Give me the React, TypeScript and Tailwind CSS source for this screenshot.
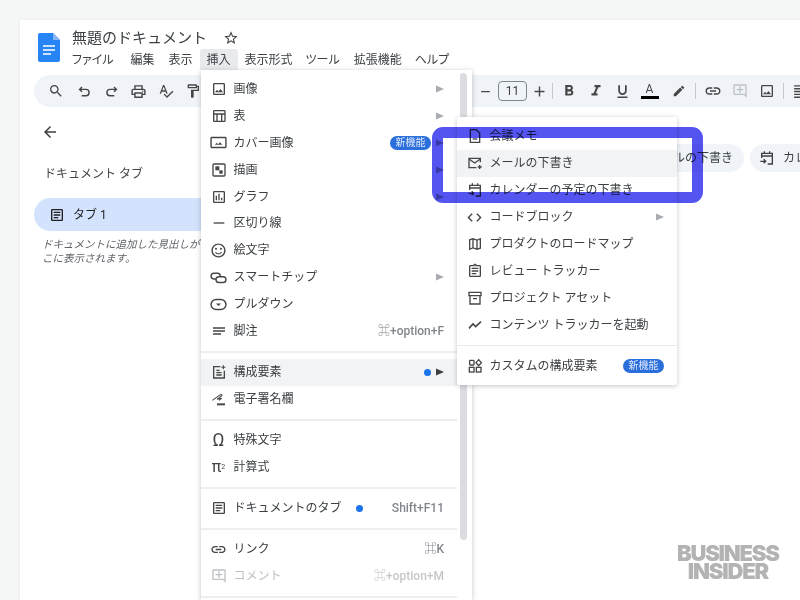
import type { ReactNode } from "react";
import {
  MdSearch,
  MdOutlinePrint,
  MdSpellcheck,
  MdOutlineFormatPaint,
  MdAdd,
  MdRemove,
  MdFormatBold,
  MdFormatItalic,
  MdFormatUnderlined,
  MdEdit,
  MdLink,
  MdOutlineAddComment,
  MdOutlineImage,
  MdFormatAlignLeft,
  MdArrowBack,
  MdStarBorder,
  MdOutlineArticle,
  MdOutlineSentimentSatisfied,
  MdCode,
  MdOutlineMap,
  MdOutlineAssignment,
  MdHorizontalRule,
  MdOutlineInsertChart,
  MdOutlineTableChart,
} from "react-icons/md";

const menus = [
  { label: "ファイル", cls: "pl-[7px] pr-[10px]" },
  { label: "編集", cls: "px-[7px]" },
  { label: "表示", cls: "px-[7px]" },
  { label: "挿入", cls: "px-[7px] bg-[#e8eaed]" },
  { label: "表示形式", cls: "px-[7px]" },
  { label: "ツール", cls: "pl-[6px] pr-[7px]" },
  { label: "拡張機能", cls: "px-[7px]" },
  { label: "ヘルプ", cls: "pl-[6px] pr-[7px]" },
];

// small drawings that the icon set has no match for
function Svg({ children, size = 16 }: { children: ReactNode; size?: number }) {
  return (
    <svg width={size} height={size} viewBox="0 0 24 24" fill="none" stroke="currentColor" strokeWidth="2">
      {children}
    </svg>
  );
}

const UndoIcon = () => (
  <Svg size={17}>
    <path d="M8.500 5.500L5 9l3.500 3.500M5.500 9H14a4.500 4.500 0 0 1 0 9H8" />
  </Svg>
);
const RedoIcon = () => (
  <Svg size={17}>
    <path d="M15.500 5.500L19 9l-3.500 3.500M18.500 9H10a4.500 4.500 0 0 0 0 9h6" />
  </Svg>
);
const CoverIcon = () => (
  <Svg size={17}>
    <rect x="1.500" y="5" width="21" height="14" rx="1" />
    <path d="M7 15l2.500-2.500 2 2 2.500-3 3.500 3.500z" fill="currentColor" stroke="none" />
  </Svg>
);
const DrawingIcon = () => (
  <Svg>
    <rect x="3" y="3" width="18" height="18" rx="1.500" />
    <rect x="6.500" y="6.500" width="6" height="6" fill="currentColor" stroke="none" />
    <rect x="12.500" y="12.500" width="5" height="5" fill="currentColor" stroke="none" />
  </Svg>
);
const ChipIcon = () => (
  <Svg size={17}>
    <rect x="1.500" y="6" width="13" height="8" rx="4" />
    <rect x="8.500" y="11" width="14" height="8" rx="4" fill="white" />
  </Svg>
);
const DropdownIcon = () => (
  <Svg size={17}>
    <rect x="1.500" y="5" width="21" height="14" rx="7" />
    <path d="M8.500 10.500h7L12 14z" fill="currentColor" stroke="none" />
  </Svg>
);
const FootnoteIcon = () => (
  <Svg>
    <path d="M3 7.500h18M3 12h18M3 16.500h12" />
  </Svg>
);
const BlockIcon = () => (
  <Svg>
    <path d="M14 4H4v17h16V10" />
    <path d="M8 9.500h5M8 13h8M8 16.500h8" />
    <path d="M18.500 2v6M15.500 5h6" strokeWidth="1.600" />
  </Svg>
);
const SignIcon = () => (
  <Svg>
    <path d="M2 14L14 5.500c2-1 3.500 1 1.500 2L9 12.500l7-1.500-4 3" strokeWidth="1.600" />
    <path d="M9 20h12" strokeWidth="3" />
  </Svg>
);
const NoteIcon = () => (
  <Svg>
    <path d="M5 2.500h9l5 5v14H5z" />
    <path d="M8.500 16.500h7" />
  </Svg>
);
const MailDraftIcon = () => (
  <Svg>
    <path d="M20 11V5H3v14h11" />
    <path d="M3 6l8.500 6L20 6" />
    <path d="M19 15v6M16 18h6" />
  </Svg>
);
const CalendarDraftIcon = () => (
  <Svg>
    <path d="M4 12V5h16v16h-7" />
    <path d="M4 9h16M8 2v4M16 2v4" />
    <path d="M2 17h8M7 14l3 3-3 3" />
  </Svg>
);
const BoxIcon = () => (
  <Svg>
    <path d="M3 3.500h18v5H3zM4.500 8.500V21h15V8.500M9 13h6" />
  </Svg>
);
const TrackerIcon = () => (
  <Svg>
    <path d="M3 17l6-6.500 4 4L21 7" strokeWidth="2.400" />
  </Svg>
);
const CustomBlocksIcon = () => (
  <Svg>
    <rect x="4" y="3.500" width="6.500" height="7" rx="1" />
    <path d="M17.500 2.500l4 4.500-4 4.500-4-4.500z" />
    <rect x="3.500" y="14" width="7" height="7" />
    <rect x="14" y="14" width="7" height="7" />
  </Svg>
);

function Arrow({ dark }: { dark?: boolean }) {
  return (
    <svg width="8" height="8" viewBox="0 0 8 8" className={dark ? "text-[#3c4043]" : "text-[#a8acb0]"}>
      <path d="M0 0.500L8 4L0 7.500z" fill="currentColor" />
    </svg>
  );
}

function Badge() {
  return (
    <span className="flex h-[14px] w-[41px] items-center justify-center rounded-full bg-[#2a6fdb] text-[10px] text-[#dfe9fb]">
      新機能
    </span>
  );
}

function Row({
  icon,
  label,
  shortcut,
  arrow,
  active,
  disabled,
  children,
}: {
  icon: ReactNode;
  label: string;
  shortcut?: string;
  arrow?: boolean;
  active?: boolean;
  disabled?: boolean;
  children?: ReactNode;
}) {
  return (
    <div
      className={`flex h-[26.9px] items-center pl-[9px] pr-[13px] text-xs ${active ? "bg-[#f1f3f4]" : ""} ${
        disabled ? "text-[#bdc1c6]" : "text-[#3c4043]"
      }`}
    >
      <span
        className={`mr-[6.5px] flex w-[17px] shrink-0 items-center justify-center ${
          disabled ? "text-[#bdc1c6]" : "text-[#444746]"
        }`}
      >
        {icon}
      </span>
      <span className="whitespace-nowrap">{label}</span>
      {children}
      {shortcut && (
        <span className={`ml-auto whitespace-nowrap font-medium ${disabled ? "text-[#c4c7ca]" : "text-[#80868b]"}`}>
          {shortcut}
        </span>
      )}
      {arrow && (
        <span className={children ? "" : "ml-auto"}>
          <Arrow dark={active} />
        </span>
      )}
    </div>
  );
}

const Sep = () => <div className="my-[6.15px] h-[2px] bg-[#eceef0]" />;

function InsertMenu() {
  return (
    <div className="absolute left-[201px] top-[70px] flex h-[530px] w-[271px] bg-white pt-[5.5px] shadow-[0_1px_5px_rgba(60,64,67,0.3)]">
      <div className="w-[256px] shrink-0">
        <Row icon={<MdOutlineImage size={16} />} label="画像" arrow />
        <Row icon={<MdOutlineTableChart size={16} />} label="表" arrow />
        <Row icon={<CoverIcon />} label="カバー画像" arrow>
          <span className="ml-auto mr-[5px]">
            <Badge />
          </span>
        </Row>
        <Row icon={<DrawingIcon />} label="描画" arrow />
        <Row icon={<MdOutlineInsertChart size={16} />} label="グラフ" arrow />
        <Row icon={<MdHorizontalRule size={16} />} label="区切り線" />
        <Row icon={<MdOutlineSentimentSatisfied size={17} />} label="絵文字" />
        <Row icon={<ChipIcon />} label="スマートチップ" arrow />
        <Row icon={<DropdownIcon />} label="プルダウン" />
        <Row icon={<FootnoteIcon />} label="脚注" shortcut="⌘+option+F" />
        <Sep />
        <Row icon={<BlockIcon />} label="構成要素" arrow active>
          <span className="ml-auto mr-[5px] h-[7px] w-[7px] rounded-full bg-[#1a73e8]" />
        </Row>
        <Row icon={<SignIcon />} label="電子署名欄" />
        <Sep />
        <Row icon={<span className="text-[18px] leading-none">Ω</span>} label="特殊文字" />
        <Row
          icon={
            <span className="text-[16px] leading-none">
              π<sup className="text-[7px]">2</sup>
            </span>
          }
          label="計算式"
        />
        <Sep />
        <Row icon={<MdOutlineArticle size={16} />} label="ドキュメントのタブ" shortcut="Shift+F11">
          <span className="ml-[14px] h-[7px] w-[7px] rounded-full bg-[#1a73e8]" />
        </Row>
        <Sep />
        <Row icon={<MdLink size={17} />} label="リンク" shortcut="⌘K" />
        <Row icon={<MdOutlineAddComment size={16} />} label="コメント" shortcut="⌘+option+M" disabled />
        <Sep />
      </div>
      <div className="ml-[3px] mt-[-3px] h-[467px] w-[7px] rounded-full bg-[#dadce0]" />
    </div>
  );
}

function SubMenu() {
  return (
    <div className="absolute left-[457px] top-[117px] h-[268px] w-[220px] rounded-[3px] bg-white pt-[6px] shadow-[0_1px_5px_rgba(60,64,67,0.3)]">
      <Row icon={<NoteIcon />} label="会議メモ" />
      <Row icon={<MailDraftIcon />} label="メールの下書き" active />
      <Row icon={<CalendarDraftIcon />} label="カレンダーの予定の下書き" />
      <Row icon={<MdCode size={17} />} label="コードブロック" arrow />
      <Row icon={<MdOutlineMap size={16} />} label="プロダクトのロードマップ" />
      <Row icon={<MdOutlineAssignment size={16} />} label="レビュー トラッカー" />
      <Row icon={<BoxIcon />} label="プロジェクト アセット" />
      <Row icon={<TrackerIcon />} label="コンテンツ トラッカーを起動" />
      <div className="my-[6.5px] h-px bg-[#e8eaed]" />
      <Row icon={<CustomBlocksIcon />} label="カスタムの構成要素">
        <span className="ml-auto">
          <Badge />
        </span>
      </Row>
    </div>
  );
}

function ToolButton({ children }: { children: ReactNode }) {
  return <span className="flex w-[27px] shrink-0 items-center justify-center text-[#444746]">{children}</span>;
}

const ToolSep = () => <span className="mx-[3px] h-[16px] w-px shrink-0 bg-[#c7c7c7]" />;

function Toolbar() {
  return (
    <div className="mt-[5px] flex h-[32px] items-center overflow-hidden rounded-l-full bg-[#f0f4f9] pl-[8px]">
      <ToolButton><MdSearch size={16} /></ToolButton>
      <span className="w-[2px] shrink-0" />
      <ToolButton><UndoIcon /></ToolButton>
      <ToolButton><RedoIcon /></ToolButton>
      <ToolButton><MdOutlinePrint size={17} /></ToolButton>
      <ToolButton><MdSpellcheck size={16} /></ToolButton>
      <ToolButton><MdOutlineFormatPaint size={16} /></ToolButton>
      <span className="w-[266px] shrink-0" />
      <ToolButton><MdRemove size={15} /></ToolButton>
      <span className="mx-[-1px] flex h-[20px] w-[29px] shrink-0 items-center justify-center rounded-[4px] border border-[#80868b] text-xs text-[#3c4043]">
        11
      </span>
      <ToolButton><MdAdd size={17} /></ToolButton>
      <span className="ml-[-1px] mr-[2px] h-[16px] w-px shrink-0 bg-[#c7c7c7]" />
      <ToolButton><MdFormatBold size={18} /></ToolButton>
      <ToolButton><MdFormatItalic size={18} /></ToolButton>
      <ToolButton><MdFormatUnderlined size={17} /></ToolButton>
      <ToolButton>
        <span className="flex flex-col items-center text-[12px] leading-[13px]">
          A<span className="h-[3px] w-[18px] bg-black" />
        </span>
      </ToolButton>
      <span className="w-[2px] shrink-0" />
      <ToolButton><MdEdit size={14} /></ToolButton>
      <ToolSep />
      <ToolButton><MdLink size={18} /></ToolButton>
      <ToolButton><span className="text-[#bdc1c6]"><MdOutlineAddComment size={16} /></span></ToolButton>
      <ToolButton><MdOutlineImage size={16} /></ToolButton>
      <ToolSep />
      <ToolButton><MdFormatAlignLeft size={17} /></ToolButton>
    </div>
  );
}

export default function App() {
  return (
    <div className="relative h-[600px] w-[800px] overflow-hidden bg-[#f5f6f6] pl-[20px] pt-[20px] [font-family:Roboto,'Noto_Sans_CJK_JP',sans-serif]">
      <div className="h-[580px] w-[780px] bg-white pl-[14px] shadow-[0_0_2px_rgba(0,0,0,0.08)]">
        {/* Header */}
        <div className="flex h-[50px] pt-[8px]">
          <svg width="22" height="29" viewBox="0 0 22 29" className="ml-[4px] mt-[5px] shrink-0">
            <path d="M2 0h13l7 7v20a2 2 0 0 1-2 2H2a2 2 0 0 1-2-2V2a2 2 0 0 1 2-2z" fill="#2684f4" />
            <path d="M15 0l7 7h-7z" fill="#8ab4f8" />
            <path d="M5 13h12M5 17h12M5 21h8" stroke="white" strokeWidth="1.600" />
          </svg>
          <div className="ml-[12px]">
            <div className="flex h-[20px] items-center text-[15px] text-[#3c4043]">
              無題のドキュメント
              <span className="ml-[16px] text-[#3c4043]">
                <MdStarBorder size={16} />
              </span>
            </div>
            <div className="ml-[-7px] mt-[1px] flex h-[21px] items-center text-xs text-[#3c4043] [font-feature-settings:'palt']">
              {menus.map((m) => (
                <span key={m.label} className={`flex h-[21px] items-center rounded-t-[3px] ${m.cls}`}>
                  {m.label}
                </span>
              ))}
            </div>
          </div>
        </div>

        <Toolbar />

        {/* Body */}
        <div className="flex">
          <div className="w-[300px] shrink-0">
            <div className="ml-[7px] mt-[16px] text-[#3c4043]">
              <MdArrowBack size={18} />
            </div>
            <div className="ml-[10px] mt-[25px] text-xs text-[#444746]">ドキュメント タブ</div>
            <div className="mt-[16px] flex h-[33px] items-center rounded-l-full bg-[#d3e3fd] pl-[15px] text-xs text-[#1f1f1f]">
              <MdOutlineArticle size={16} />
              <span className="ml-[8px]">タブ 1</span>
            </div>
            <p className="ml-[8px] mt-[7px] w-[170px] text-[10.5px] italic leading-[14px] text-[#5f6368]">
              ドキュメントに追加した見出しがここに表示されます。
            </p>
          </div>
          <div className="mt-[37px] flex gap-[6px] pl-[279px]">
            <div className="flex h-[28px] items-center rounded-full bg-[#f0f4f9] pl-[12px] pr-[11px] text-xs whitespace-nowrap text-[#3c4043]">
              <MailDraftIcon />
              <span className="ml-[8px]">メールの下書き</span>
            </div>
            <div className="flex h-[28px] items-center rounded-l-full bg-[#f0f4f9] pl-[9px] text-xs whitespace-nowrap text-[#3c4043]">
              <CalendarDraftIcon />
              <span className="ml-[8px]">カレンダー</span>
            </div>
          </div>
        </div>
      </div>

      <InsertMenu />
      <SubMenu />

      {/* marked area on the picture */}
      <div className="absolute left-[432px] top-[127px] h-[76px] w-[271px] rounded-[11px] border-[11px] border-[#5454f0] mix-blend-multiply" />

      <div className="absolute left-[677px] top-[544px] flex flex-col items-center text-[22px] font-black leading-[18px] tracking-[-1.2px] text-[#b3b3b3] [font-family:Inter,sans-serif]">
        <span>BUSINESS</span>
        <span>INSIDER</span>
      </div>
    </div>
  );
}
